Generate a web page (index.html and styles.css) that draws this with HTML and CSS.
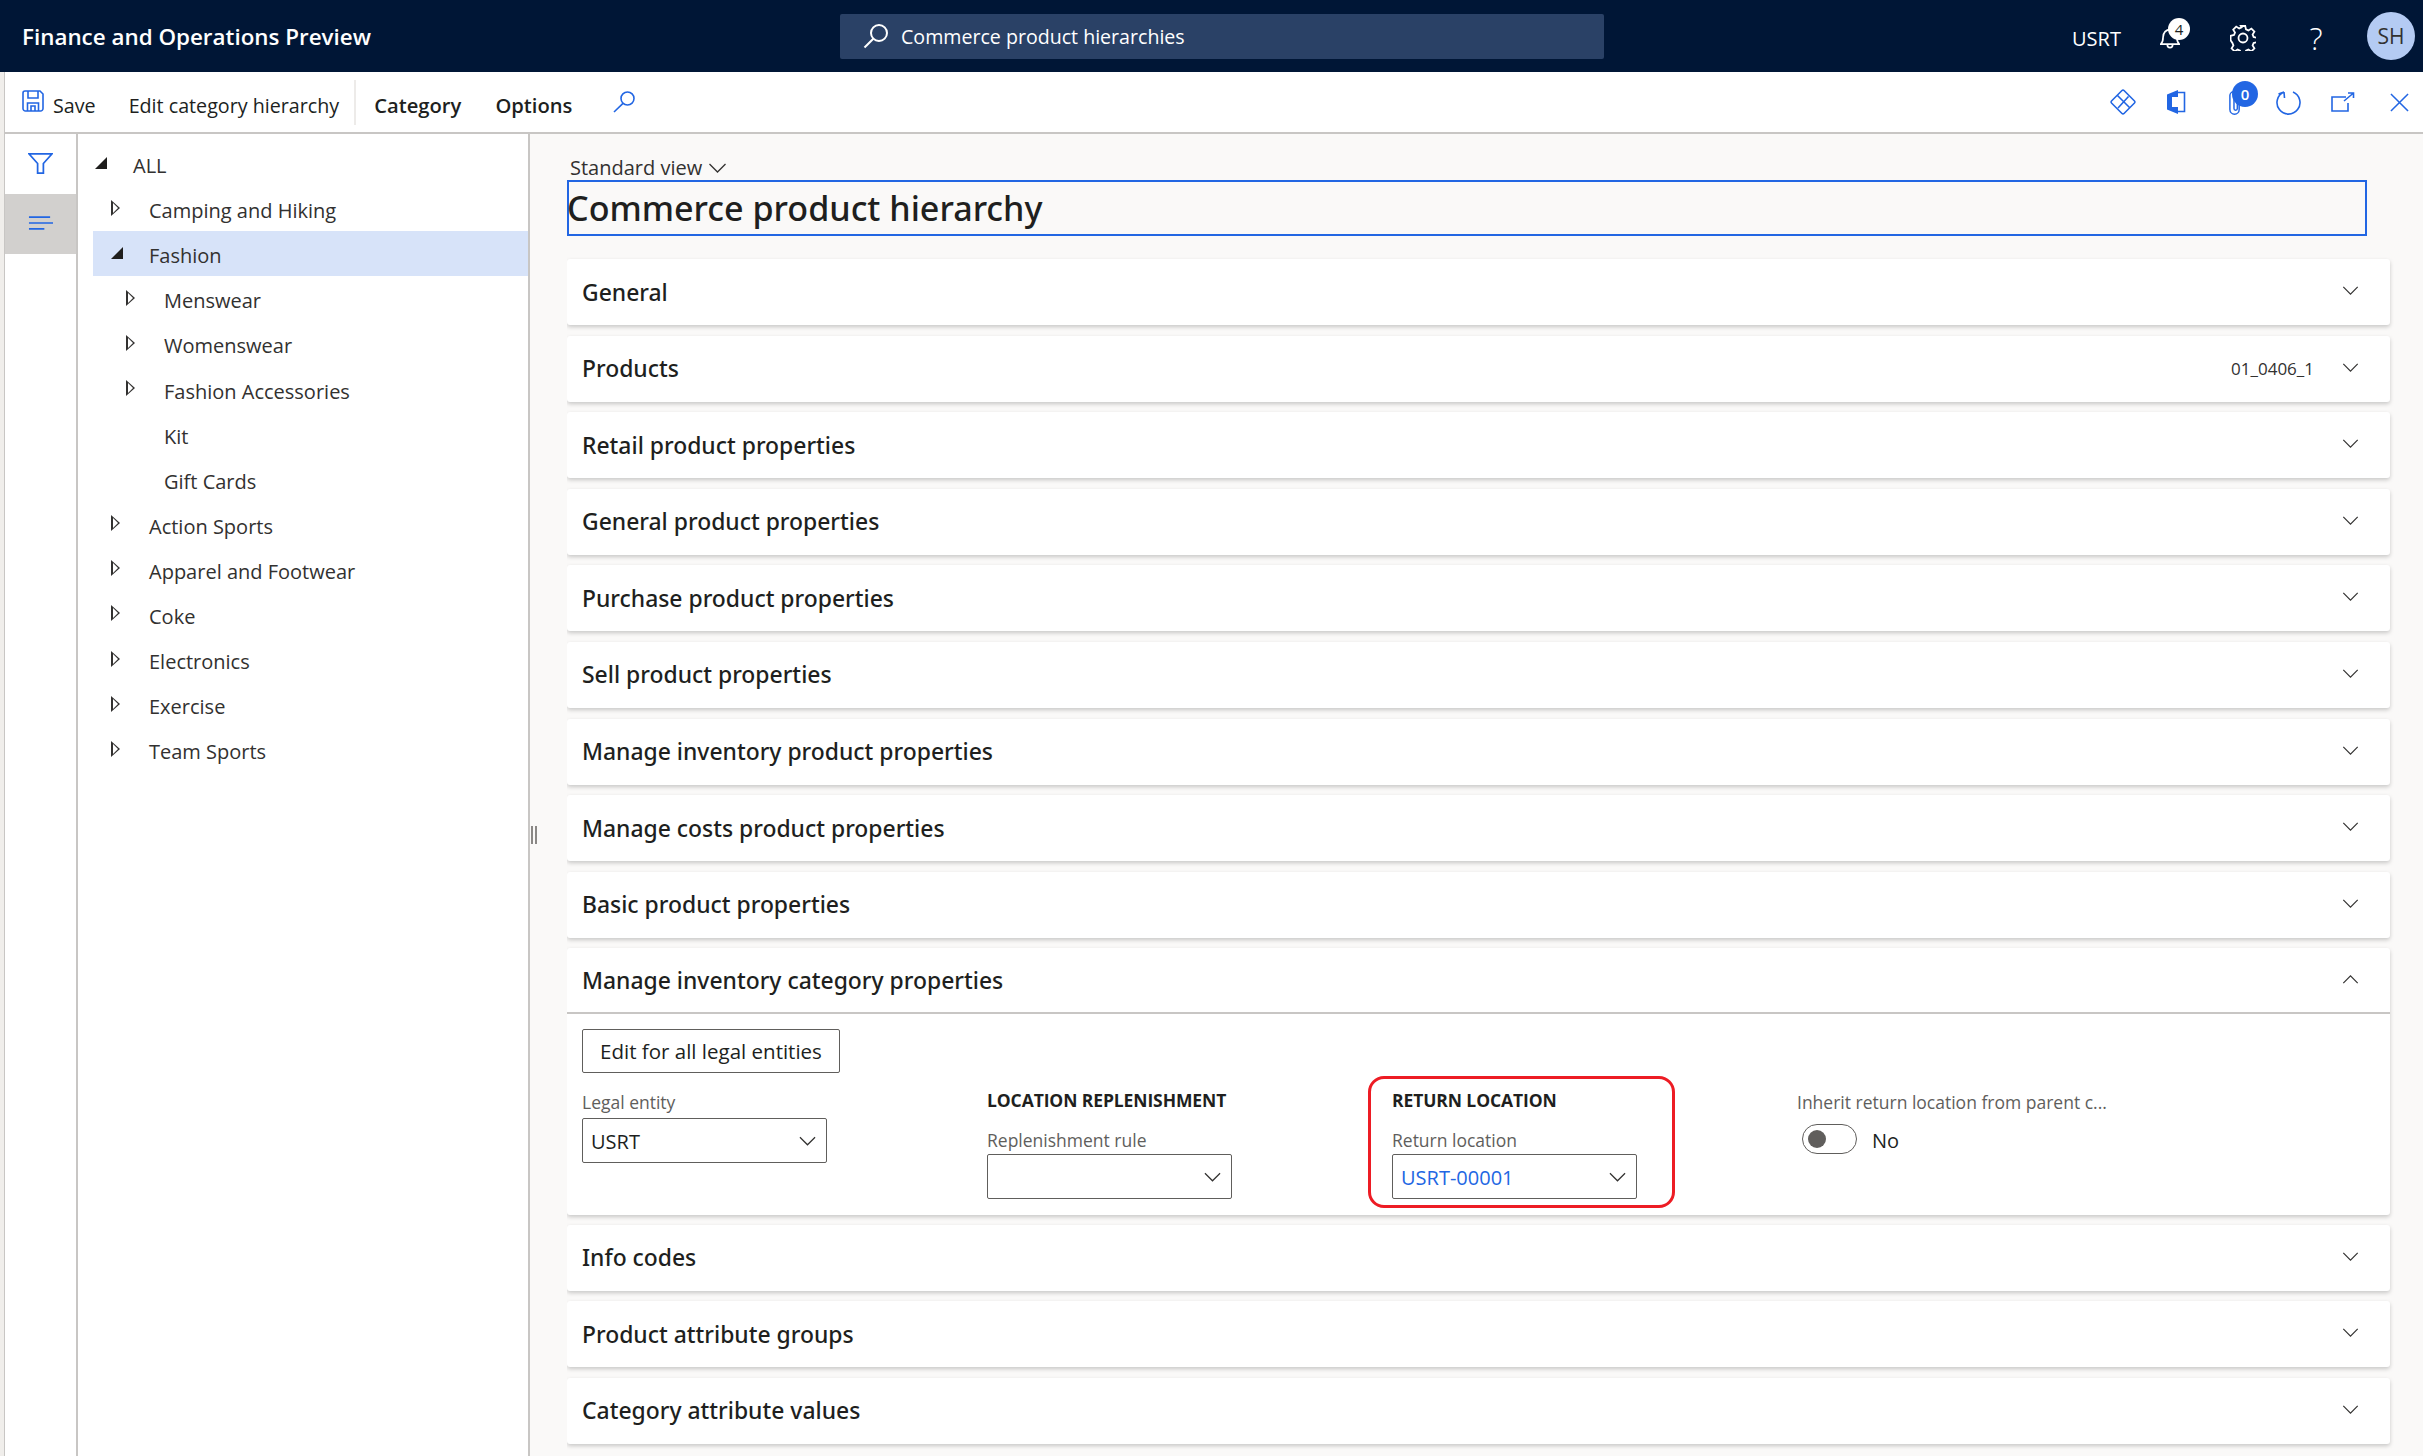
FILE: index.html
```html
<!DOCTYPE html>
<html lang="en">
<head>
<meta charset="utf-8">
<title>Commerce product hierarchy</title>
<link rel="stylesheet" href="styles.css">
</head>
<body>
<header class="topbar">
  <div class="app-title">Finance and Operations Preview</div>
  <div class="global-search">
    <svg class="gs-icon" viewBox="0 0 26 26"><circle cx="16" cy="10" r="8"/><path d="M10.3 15.7 1.5 24.5"/></svg>
    <span>Commerce product hierarchies</span>
  </div>
  <div class="top-right">
    <span class="company">USRT</span>
    <span class="top-btn bell">
      <svg class="top-icon" viewBox="0 2 26 28"><path d="M1 24c2-2 3-4 3-9 0-6 4-10 9-10s9 4 9 10c0 5 1 7 3 9zM9.500 24c0 6 7 6 7 0"/></svg>
      <span class="bell-badge">4</span>
    </span>
    <span class="top-btn gear">
      <svg class="top-icon" viewBox="0 0 26 26"><circle cx="13" cy="13" r="4.500"/><path d="M10.800 1h4.400l.8 3.400 2.400 1 3-1.800 3 3-1.800 3 1 2.400 3.400.8v4.400l-3.400.8-1 2.400 1.800 3-3 3-3-1.800-2.400 1-.8 3.400h-4.400l-.8-3.400-2.400-1-3 1.800-3-3 1.800-3-1-2.400L.6 15.200v-4.400l3.400-.8 1-2.400-1.800-3 3-3 3 1.800 2.400-1z"/></svg>
    </span>
    <span class="top-btn help">?</span>
    <span class="avatar">SH</span>
  </div>
</header>

<div class="shell">
  <div class="toolbar">
    <div class="tb-left">
      <span class="tb-item tb-save">
        <svg class="tb-icon save-icon" viewBox="0 0 22 22"><path d="M3 1h15l3 3v14.500a2.500 2.500 0 0 1-2.500 2.500h-15A2.500 2.500 0 0 1 1 18.500V3a2 2 0 0 1 2-2zM6 1v7h10V1M5.500 21v-8h11v8M9 21v-5h4v5"/></svg>
        Save
      </span>
      <span class="tb-item tb-edit">Edit category hierarchy</span>
      <span class="tb-item tb-tab tb-category">Category</span>
      <span class="tb-item tb-tab tb-options">Options</span>
      <svg class="tb-icon tb-search" viewBox="0 0 22 22"><circle cx="14.500" cy="7.500" r="6.500"/><path d="M10 12.300 1 21"/></svg>
    </div>
    <div class="tb-right">
      <svg class="tb-icon ic-diamond" viewBox="0 0 26 26"><path d="M12 1.500a1.400 1.400 0 0 1 2 0L24.500 12a1.400 1.400 0 0 1 0 2L14 24.500a1.400 1.400 0 0 1-2 0L1.500 14a1.400 1.400 0 0 1 0-2zM7.500 6.500 19.500 18.500M18.500 7.500 8 19"/></svg>
      <svg class="tb-icon ic-office" viewBox="0 0 20 26"><path class="solid" d="M1 5.500 12 1v24L1 20.500z M6 8v10l6-.2V8z"/><path d="M12 3.500h6.500v19H12"/></svg>
      <span class="ic-clip">
        <svg class="tb-icon" viewBox="0 0 14 28"><path d="M11.500 7v14a5 5 0 0 1-10 0V6a4 4 0 0 1 8 0v14a1.800 1.800 0 0 1-3.600 0V8"/></svg>
        <span class="clip-badge">0</span>
      </span>
      <svg class="tb-icon ic-refresh" viewBox="0 0 26 26"><path d="M9 3A11.500 11.500 0 1 0 18 3M9 3 9.500 9M9 3 3.500 5"/></svg>
      <svg class="tb-icon ic-open" viewBox="0 0 24 20"><path d="M15 5H1v14h16v-8M13 9 22.500 1M17 1h5.500v5"/></svg>
      <svg class="tb-icon ic-close" viewBox="0 0 20 20"><path d="M1 1l18 18M19 1 1 19"/></svg>
    </div>
  </div>

  <div class="workspace">
    <nav class="rail">
      <div class="rail-btn">
        <svg class="rail-icon" viewBox="0 0 26 22"><path d="M1 1h24L16 11v10h-6V11z" /></svg>
      </div>
      <div class="rail-btn is-active">
        <svg class="rail-icon" viewBox="0 0 26 16"><path d="M1 2h22M1 8h25M1 14h16"/></svg>
      </div>
    </nav>

    <aside class="tree">
      <div class="node"><span class="tw open"></span><span>ALL</span></div>
      <div class="node d1"><span class="tw"></span><span>Camping and Hiking</span></div>
      <div class="node d1 selected"><span class="tw open"></span><span>Fashion</span></div>
      <div class="node d2"><span class="tw"></span><span>Menswear</span></div>
      <div class="node d2"><span class="tw"></span><span>Womenswear</span></div>
      <div class="node d2"><span class="tw"></span><span>Fashion Accessories</span></div>
      <div class="node d2"><span class="tw none"></span><span>Kit</span></div>
      <div class="node d2"><span class="tw none"></span><span>Gift Cards</span></div>
      <div class="node d1"><span class="tw"></span><span>Action Sports</span></div>
      <div class="node d1"><span class="tw"></span><span>Apparel and Footwear</span></div>
      <div class="node d1"><span class="tw"></span><span>Coke</span></div>
      <div class="node d1"><span class="tw"></span><span>Electronics</span></div>
      <div class="node d1"><span class="tw"></span><span>Exercise</span></div>
      <div class="node d1"><span class="tw"></span><span>Team Sports</span></div>
    </aside>

    <div class="splitter"><span class="grip"></span></div>

    <main class="content">
      <div class="view-select">Standard view
        <svg class="chev small" viewBox="0 0 18 10"><path d="M1 1l8 8 8-8"/></svg>
      </div>
      <div class="page-title">Commerce product hierarchy</div>

      <section class="card"><div class="card-head"><h2>General</h2><svg class="chev" viewBox="0 0 18 10"><path d="M1 1l8 8 8-8"/></svg></div></section>
      <section class="card"><div class="card-head"><h2>Products</h2><span class="summary">01_0406_1</span><svg class="chev" viewBox="0 0 18 10"><path d="M1 1l8 8 8-8"/></svg></div></section>
      <section class="card"><div class="card-head"><h2>Retail product properties</h2><svg class="chev" viewBox="0 0 18 10"><path d="M1 1l8 8 8-8"/></svg></div></section>
      <section class="card"><div class="card-head"><h2>General product properties</h2><svg class="chev" viewBox="0 0 18 10"><path d="M1 1l8 8 8-8"/></svg></div></section>
      <section class="card"><div class="card-head"><h2>Purchase product properties</h2><svg class="chev" viewBox="0 0 18 10"><path d="M1 1l8 8 8-8"/></svg></div></section>
      <section class="card"><div class="card-head"><h2>Sell product properties</h2><svg class="chev" viewBox="0 0 18 10"><path d="M1 1l8 8 8-8"/></svg></div></section>
      <section class="card"><div class="card-head"><h2>Manage inventory product properties</h2><svg class="chev" viewBox="0 0 18 10"><path d="M1 1l8 8 8-8"/></svg></div></section>
      <section class="card"><div class="card-head"><h2>Manage costs product properties</h2><svg class="chev" viewBox="0 0 18 10"><path d="M1 1l8 8 8-8"/></svg></div></section>
      <section class="card"><div class="card-head"><h2>Basic product properties</h2><svg class="chev" viewBox="0 0 18 10"><path d="M1 1l8 8 8-8"/></svg></div></section>

      <section class="card expanded">
        <div class="card-head"><h2>Manage inventory category properties</h2><svg class="chev up" viewBox="0 0 18 10"><path d="M1 1l8 8 8-8"/></svg></div>
        <div class="card-body">
          <button class="btn">Edit for all legal entities</button>
          <div class="fields">
            <div class="col col-legal">
              <label class="lbl">Legal entity</label>
              <div class="select"><span>USRT</span><svg class="chev sel" viewBox="0 0 18 10"><path d="M1 1l8 8 8-8"/></svg></div>
            </div>
            <div class="col">
              <div class="group">LOCATION REPLENISHMENT</div>
              <label class="lbl">Replenishment rule</label>
              <div class="select"><span></span><svg class="chev sel" viewBox="0 0 18 10"><path d="M1 1l8 8 8-8"/></svg></div>
            </div>
            <div class="col col-return">
              <span class="highlight"></span>
              <div class="group">RETURN LOCATION</div>
              <label class="lbl">Return location</label>
              <div class="select"><span class="link">USRT-00001</span><svg class="chev sel" viewBox="0 0 18 10"><path d="M1 1l8 8 8-8"/></svg></div>
            </div>
            <div class="col col-legal">
              <label class="lbl">Inherit return location from parent c...</label>
              <div class="toggle-row"><span class="toggle"><span class="thumb"></span></span><span class="toggle-text">No</span></div>
            </div>
          </div>
        </div>
      </section>

      <section class="card"><div class="card-head"><h2>Info codes</h2><svg class="chev" viewBox="0 0 18 10"><path d="M1 1l8 8 8-8"/></svg></div></section>
      <section class="card"><div class="card-head"><h2>Product attribute groups</h2><svg class="chev" viewBox="0 0 18 10"><path d="M1 1l8 8 8-8"/></svg></div></section>
      <section class="card"><div class="card-head"><h2>Category attribute values</h2><svg class="chev" viewBox="0 0 18 10"><path d="M1 1l8 8 8-8"/></svg></div></section>
    </main>
  </div>
</div>
</body>
</html>
```

FILE: styles.css
```css
* { box-sizing: border-box; }
html, body { margin: 0; height: 1456px; overflow: hidden; }
body {
  font-family: "Open Sans", "Noto Sans", sans-serif;
  font-size: 20px;
  color: #201f1e;
  background: #f0eeeb;
}
svg { display: block; fill: none; flex: none; }

/* top bar */
.topbar {
  height: 72px;
  background: #001636;
  color: #fff;
  display: grid;
  grid-template-columns: 840px 764px 1fr;
  align-items: center;
}
.app-title { padding-left: 22px; font-size: 22.400px; font-weight: 600; }
.global-search {
  height: 45px;
  background: #2a4166;
  border-radius: 2px;
  display: flex;
  align-items: center;
  gap: 12px;
  padding-left: 23px;
  font-size: 19.600px;
}
.global-search span { padding-top: 1px; }
.gs-icon { width: 26px; height: 26px; stroke: #fff; stroke-width: 2; }
.top-right { display: flex; align-items: center; height: 72px; position: relative; }
.company { margin-left: 468px; width: 47px; font-size: 20px; margin-top: 4px; }
.top-btn { display: flex; justify-content: center; align-items: center; position: relative; margin-top: 4px; }
.bell { margin-left: 41px; width: 20px; height: 24px; }
.gear { margin-left: 49px; width: 28px; }
.top-icon { stroke: #fff; stroke-width: 1.800; width: 26px; height: 26px; }
.bell .top-icon { width: 20px; height: 24px; stroke-width: 2.200; }
.bell-badge {
  position: absolute; left: 8px; top: -8px;
  width: 22px; height: 22px; border-radius: 50%;
  background: #fff; color: #201f1e;
  font-size: 15px; line-height: 22px; text-align: center;
}
.help { margin-left: 49px; width: 20px; font-size: 31px; font-weight: 300; line-height: 1; }
.avatar {
  margin-left: 41px; width: 48px; height: 48px; border-radius: 50%;
  background: #b4cbf3; color: #323130;
  display: flex; align-items: center; justify-content: center;
  font-size: 21px;
}

/* shell */
.shell { margin-left: 4px; border-left: 1px solid #c8c6c4; height: 1384px; display: flex; flex-direction: column; }
.toolbar {
  height: 62px;
  flex: none;
  background: #fff;
  border-bottom: 2px solid #c8c6c4;
  display: flex;
  justify-content: space-between;
  align-items: center;
}
.tb-left, .tb-right { display: flex; align-items: center; height: 100%; }
.tb-item { font-size: 19.700px; white-space: nowrap; padding-top: 6px; }
.tb-icon { stroke: #2266e3; stroke-width: 1.600; }
.tb-save { display: flex; align-items: center; gap: 9px; margin-left: 17px; }
.save-icon { width: 22px; height: 22px; position: relative; top: -4px; }
.tb-edit { margin-left: 33px; padding: 0 15px 0 0; border-right: 2px solid #edebe9; height: 45px; line-height: 51px; }
.tb-tab { font-weight: 600; font-size: 20.200px; }
.tb-category { margin-left: 18px; }
.tb-options { margin-left: 34px; }
.tb-search { width: 22px; height: 22px; margin-left: 41px; margin-top: 0; }
.tb-right { padding-right: 14px; }
.ic-diamond { width: 26px; height: 26px; }
.ic-office { width: 20px; height: 26px; margin-left: 30px; }
.ic-office .solid { fill: #2266e3; fill-rule: evenodd; stroke: none; }
.ic-clip { position: relative; margin-left: 42px; width: 14px; }
.ic-clip svg { width: 14px; height: 26px; margin-top: 2px; }
.clip-badge {
  position: absolute; left: 4px; top: -7px;
  width: 26px; height: 26px; border-radius: 50%;
  background: #2266e3; color: #fff;
  font-size: 15px; font-weight: 600; line-height: 26px; text-align: center;
}
.ic-refresh { width: 26px; height: 26px; margin-left: 33px; }
.ic-open { width: 24px; height: 20px; margin-left: 30px; }
.ic-close { width: 19px; height: 19px; margin-left: 35px; }

/* workspace */
.workspace { flex: 1; display: flex; min-height: 0; background: #faf9f8; }
.rail { width: 73px; flex: none; background: #fff; border-right: 2px solid #c8c6c4; }
.rail-btn { height: 60px; display: flex; align-items: center; justify-content: center; }
.rail-btn.is-active { background: #d2d0ce; }
.rail-icon { width: 25px; stroke: #2266e3; stroke-width: 1.800; }
.rail-btn:first-child .rail-icon { height: 23px; margin-top: -2px; }
.rail-btn.is-active .rail-icon { height: 16px; margin-top: -2px; }

.tree { width: 452px; flex: none; background: #fff; border-right: 2px solid #c8c6c4; padding: 7px 0 0 15px; }
.node { height: 45.100px; display: flex; align-items: center; font-size: 20px; color: #323130; padding-left: 2px; padding-top: 4px; }
.node.selected { background: #d7e3f9; }
.tw { width: 38px; flex: none; position: relative; height: 18px; }
.tw::before {
  content: ""; position: absolute; left: 0; top: -2px;
  border-style: solid; border-width: 8px 0 8px 9px;
  border-color: transparent transparent transparent #323130;
}
.tw::after {
  content: ""; position: absolute; left: 2px; top: 1px;
  border-style: solid; border-width: 5px 0 5px 5px;
  border-color: transparent transparent transparent #fff;
}
.tw.open::before { left: 0; top: 0; border-width: 0 0 12px 12px; border-color: transparent transparent #1f1e1d transparent; }
.tw.open::after, .tw.none::before, .tw.none::after { display: none; }
.node.d1 { padding-left: 18px; }
.node.d2 { padding-left: 33px; }

.splitter { width: 37px; flex: none; position: relative; }
.grip {
  position: absolute; left: 1px; top: 692px;
  width: 6px; height: 18px;
  border-left: 2px solid #8a8886; border-right: 2px solid #8a8886;
}

.content { flex: 1; min-width: 0; padding: 0 33px 0 0; overflow: hidden; }
.view-select { height: 46px; padding: 21px 0 0 3px; font-size: 20px; line-height: 26px; display: flex; gap: 6px; color: #323130; }
.chev { width: 17px; height: 9px; stroke: #323130; stroke-width: 1.300; }
.chev.small { margin-top: 8px; width: 19px; height: 10px; }
.page-title {
  width: 1800px; height: 56px;
  border: 2px solid #2266e3;
  font-family: "Noto Sans", "Open Sans", sans-serif;
  font-size: 34.100px; font-weight: 500; line-height: 53px;
  color: #201f1e;
  margin-bottom: 23px;
  white-space: nowrap;
  text-indent: -2px;
}

.card {
  background: #fff; border-radius: 3px;
  box-shadow: 0 2px 4px rgba(0,0,0,.2);
  margin-bottom: 10.600px;
}
.card-head { height: 66px; display: flex; align-items: center; padding: 0 31px 0 15px; }
.card-head h2 {
  margin: 0; padding-top: 0; flex: 1; color: #201f1e;
  font-family: "Noto Sans", "Open Sans", sans-serif;
  font-size: 22.900px; font-weight: 500;
}
.card-head .chev { margin-top: -3px; }
.card-head .chev.up { margin-top: -1px; transform: rotate(180deg); }
.summary { font-size: 17px; margin-right: 28px; color: #323130; }
.card.expanded { height: 267px; margin-bottom: 9.400px; }
.expanded .card-head { height: 66px; border-bottom: 2px solid #c8c6c4; }
.card-body { padding: 15px 0 0 15px; }
.btn {
  display: block; width: 258px; height: 44px;
  border: 1.500px solid #605e5c; border-radius: 2px; background: #fff;
  font: inherit; font-size: 20.500px; color: #201f1e; padding: 0;
}
.fields { display: grid; grid-template-columns: repeat(4, 405px); }
.col { position: relative; padding-top: 17px; }
.lbl { display: block; font-size: 17.500px; line-height: 24px; color: #605e5c; white-space: nowrap; }
.col-legal .lbl { height: 28px; line-height: 25px; }
.group { font-size: 17.500px; font-weight: 700; line-height: 24px; margin-bottom: 17px; color: #201f1e; white-space: nowrap; letter-spacing: -0.100px; margin-top: -2px; }
.group + .lbl { margin-top: -1px; }
.select {
  width: 245px; height: 45px; margin-top: 2px;
  border: 1.500px solid #605e5c; border-radius: 2px; background: #fff;
  display: flex; align-items: center; justify-content: space-between;
  padding: 0 10px 0 8px; font-size: 20px; color: #201f1e;
}
.select span { padding-top: 2px; }
.col-legal .select { margin-top: 0; }
.link { color: #2266e3; }
.chev.sel { width: 17px; height: 10px; }
.highlight {
  position: absolute; left: -24px; top: 3px; width: 307px; height: 132px;
  border: 3px solid #ed1c24; border-radius: 16px;
}
.toggle-row { display: flex; align-items: center; gap: 15px; padding-left: 5px; margin-top: 6px; }
.toggle {
  width: 55px; height: 30px; border: 1.500px solid #605e5c; border-radius: 15px;
  display: flex; align-items: center; padding-left: 5px; background: #fff;
}
.thumb { width: 18px; height: 18px; border-radius: 50%; background: #605e5c; }
.toggle-text { font-size: 20px; padding-top: 3px; }
```
